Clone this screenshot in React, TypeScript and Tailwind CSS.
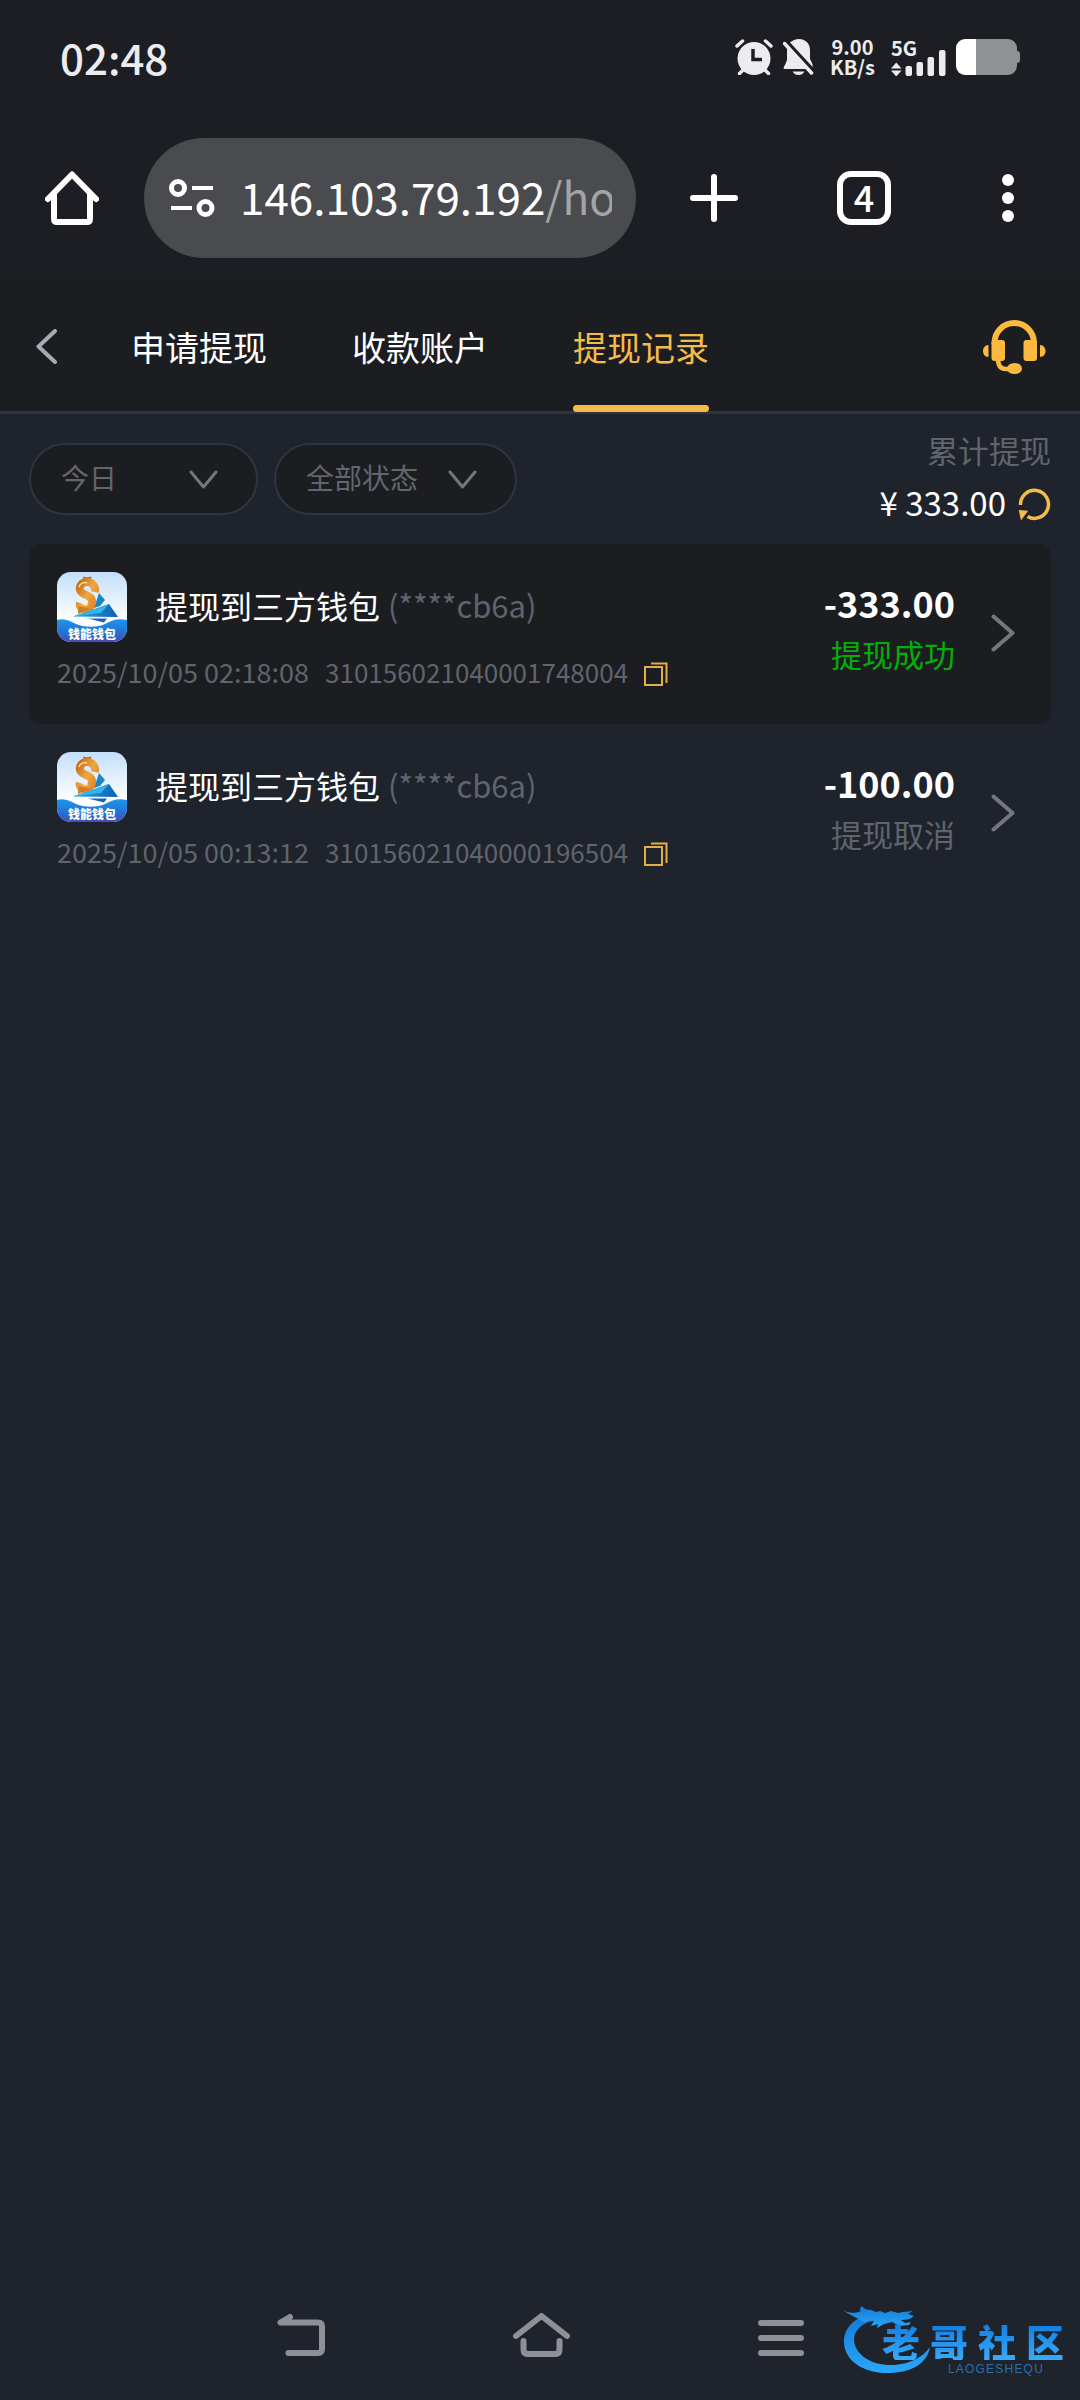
import React from 'react';

const records = [
    {
        id: '310156021040001748004',
        title: '提现到三方钱包',
        account: '(****cb6a)',
        time: '2025/10/05 02:18:08',
        amount: '-333.00',
        status: '提现成功',
        rowClass: 'bg-[#1c1d21]',
        statusClass: 'text-[#04ae08]'
    },
    {
        id: '310156021040000196504',
        title: '提现到三方钱包',
        account: '(****cb6a)',
        time: '2025/10/05 00:13:12',
        amount: '-100.00',
        status: '提现取消',
        rowClass: '',
        statusClass: 'text-[#5f646d]'
    }
];

const tabs = ['申请提现', '收款账户', '提现记录'];

const StatusBar: React.FC = () => (
    <div className="flex h-[114px] items-center justify-between pl-15 pr-[60px] text-[#ececee]">
        <span className="text-[42px] font-medium leading-none">02:48</span>
        <div className="flex items-center">
            <svg className="h-9 w-[38px]" viewBox="0 0 38 36" fill="none">
                <path d="M8 31 4.500 34.500M30 31l3.500 3.500" stroke="#ececee" strokeWidth="3.500" strokeLinecap="round" />
                <circle cx="19" cy="19.500" r="16.500" fill="#ececee" />
                <path d="M1.500 7.500 8 2M30 2l6.500 5.500" stroke="#1d1e23" strokeWidth="7" />
                <path d="M2 7 7.500 2M30.500 2l5.500 5" stroke="#ececee" strokeWidth="3.500" strokeLinecap="round" />
                <path d="M18 10v10.500h9" stroke="#1d1e23" strokeWidth="3.500" />
            </svg>
            <svg className="ml-[10px] h-9 w-[31px]" viewBox="0 0 31 36">
                <path d="M16 0c7 0 11 5 11 11v9l2 4c1 3 1 6-1 6H2c-2 0-1.500-2 0-4l2-5V11C4 5 9 0 16 0Z" fill="#ececee" />
                <path d="M9.500 32.500h12c-1.500 2.500-3.500 3.500-6 3.500s-4.500-1-6-3.500Z" fill="#ececee" />
                <path d="m3.500 2.500 28 30.500" stroke="#1d1e23" strokeWidth="4" />
                <path d="m1.500 4.500 27 29.500" stroke="#ececee" strokeWidth="3.500" strokeLinecap="round" />
            </svg>
            <div className="ml-4 text-center text-[20px] font-bold leading-[20px]">
                <div>9.00</div>
                <div>KB/s</div>
            </div>
            <div className="ml-4 flex flex-col">
                <span className="text-[20px] font-bold leading-[20px]">5G</span>
                <svg className="-mt-2 h-[26px] w-[55px]" viewBox="0 0 55 26" fill="#ececee">
                    <path d="M0 18.500 5.250 12.500l5.250 6zM0 20.500l5.250 6 5.250-6z" />
                    <rect x="14.500" y="16" width="6.500" height="10" rx="2" />
                    <rect x="25.500" y="12" width="6.500" height="14" rx="2" />
                    <rect x="36.500" y="7" width="6.500" height="19" rx="2" />
                    <rect x="48" y="0" width="6.500" height="26" rx="2" />
                </svg>
            </div>
            <svg className="ml-[10px] h-9 w-16" viewBox="0 0 64 36">
                <path d="M20 0h32a9 9 0 0 1 9 9v3c2 0 3 1 3 3v6c0 2-1 3-3 3v3a9 9 0 0 1-9 9H20z" fill="#8f9193" />
                <path d="M20 0H9a9 9 0 0 0-9 9v18a9 9 0 0 0 9 9h11z" fill="#fff" />
            </svg>
        </div>
    </div>
);

const BrowserBar: React.FC = () => (
    <div className="flex h-[168px] items-center pl-[45px] pr-[66px] text-white">
        <button aria-label="Home">
            <svg className="h-[54px] w-[54px]" viewBox="0 0 54 54" fill="none" stroke="currentColor" strokeWidth="6" strokeLinecap="round" strokeLinejoin="round">
                <path d="M3 28 27 3.500 51 28" />
                <path d="M9 24v24q0 3 3 3h30q3 0 3-3V24" />
            </svg>
        </button>
        <div className="ml-[45px] flex h-[120px] min-w-0 flex-1 items-center rounded-full bg-[#4a4b4e] pl-[25px] pr-6">
            <svg className="h-[38px] w-[46px] shrink-0" viewBox="0 0 46 38" fill="none" stroke="currentColor" strokeWidth="5">
                <circle cx="9" cy="9" r="6.500" />
                <path d="M23 9h21M2 29h21" strokeWidth="4" />
                <circle cx="36.500" cy="29" r="6.500" />
            </svg>
            <div className="ml-[25px] flex-1 overflow-hidden whitespace-nowrap pb-1 text-[44px] leading-[64px]">
                146.103.79.192<span className="text-[#a3a4a7]">/ho</span>
            </div>
        </div>
        <button aria-label="New tab" className="ml-[54px]">
            <svg className="h-12 w-12" viewBox="0 0 48 48" stroke="currentColor" strokeWidth="6" strokeLinecap="round">
                <path d="M3 24h42M24 3v42" />
            </svg>
        </button>
        <button aria-label="Tabs" className="ml-[99px] flex h-[54px] w-[54px] items-center justify-center rounded-[14px] border-[6px] border-white pb-1 text-[36px] font-medium leading-none">
            4
        </button>
        <button aria-label="Menu" className="ml-[111px]">
            <svg className="h-12 w-3" viewBox="0 0 12 48" fill="currentColor">
                <circle cx="6" cy="6" r="6" />
                <circle cx="6" cy="24" r="6" />
                <circle cx="6" cy="42" r="6" />
            </svg>
        </button>
    </div>
);

const Filter: React.FC<{ label: string; value: string; widthClass: string }> = ({ label, value, widthClass }) => (
    <div className={`relative h-[72px] ${widthClass}`}>
        <select
            aria-label={label}
            className="h-full w-full appearance-none rounded-full border-2 border-[#2f353f] bg-[#1c1d21] pb-1 pl-[30px] pr-16 text-[28px] text-[#62666d]"
        >
            <option>{value}</option>
        </select>
        <svg className="pointer-events-none absolute right-10 top-[27px] h-[19px] w-[29px]" viewBox="0 0 29 19" fill="none" stroke="#74777d" strokeWidth="3" strokeLinecap="round" strokeLinejoin="round">
            <path d="m2 2 12.500 15L27 2" />
        </svg>
    </div>
);

const WalletLogo: React.FC = () => (
    <svg className="h-[70px] w-[70px] shrink-0 rounded-[14px]" viewBox="0 0 70 70">
        <defs>
            <linearGradient id="sky" x1="0" y1="0" x2="0" y2="1">
                <stop offset="0" stopColor="#c3dffb" />
                <stop offset="0.700" stopColor="#ffffff" />
            </linearGradient>
            <linearGradient id="gold" x1="0" y1="0" x2="1" y2="1">
                <stop offset="0" stopColor="#c9721c" />
                <stop offset="0.500" stopColor="#f0a83e" />
                <stop offset="1" stopColor="#d9812a" />
            </linearGradient>
            <linearGradient id="sail" x1="0" y1="0" x2="1" y2="0">
                <stop offset="0" stopColor="#22a7e8" />
                <stop offset="1" stopColor="#0f62ae" />
            </linearGradient>
            <linearGradient id="sea" x1="0" y1="0" x2="0" y2="1">
                <stop offset="0" stopColor="#1e96ea" />
                <stop offset="0.600" stopColor="#2470d4" />
                <stop offset="1" stopColor="#4a4bb4" />
            </linearGradient>
        </defs>
        <rect width="70" height="70" fill="url(#sky)" />
        <path d="m42 21 6 7-5 6-6 2z" fill="#1a86c4" />
        <path d="M26 4.500q4 1.500 8.500 0L33 11h-6z" fill="#b9691f" />
        <path d="M38 20c1-6-3-10-8-10s-8 4-7 8c1 5 12 5 12 11 0 5-3 8-7 8-4 0-6-3-5-6" fill="none" stroke="url(#gold)" strokeWidth="8" strokeLinejoin="round" />
        <path d="M22 34c-1 3-1 5-1 8l13-5z" fill="#cc7d28" />
        <path d="M22 15c1-4 5-5 8-4M26 32c2 1.500 4 1 5 0" fill="none" stroke="#ffdf9c" strokeWidth="1.500" />
        <path d="M16 44.500 52 32l9 13z" fill="url(#sail)" />
        <path d="M16 44.500 52 32l-8 9z" fill="#35b2ea" />
        <path d="M31 46.500h19l-3 4z" fill="#1b62b4" />
        <path d="M0 48c8-2 13 1 19 4s21 4 29 0 12-6 22-4v22H0z" fill="url(#sea)" />
        <text x="35" y="67" textAnchor="middle" fontSize="12" fontWeight="900" fill="#fff">钱能钱包</text>
    </svg>
);

const Watermark: React.FC = () => (
    <div className="absolute bottom-6 right-4 h-[70px] w-[222px]">
        <svg className="absolute inset-0 h-full w-full" viewBox="0 0 222 70">
            <defs>
                <linearGradient id="dragon" x1="0" y1="0" x2="0" y2="1">
                    <stop offset="0" stopColor="#1479d6" />
                    <stop offset="1" stopColor="#2aa8fa" />
                </linearGradient>
            </defs>
            <path d="M24 9C9 14 1 25 2 37c1 18 20 31 46 30 22-1 37-9 40-26-7 10-20 17-36 18-22 1-39-10-40-25 0-8 5-14 16-19z" fill="url(#dragon)" />
            <path d="M0 4c6 3 13 4 19 1-2-1-1-3 1-5 2 3 5 4 9 4l5 2 4-1 5 2 6-2 7 2 5-1 10-1-5 3 6 2c-3 3-8 4-13 4l4 3 6-1-2 3-9 1-8-4-8 2-7 4 1-4-7 2 3-5-10 1c-6-4-14-7-22-12Z" fill="url(#dragon)" />
        </svg>
        <div className="absolute right-0 top-4 flex w-[182px] justify-between bg-gradient-to-b from-[#0f7be0] to-[#39aaf8] bg-clip-text text-[38px] font-black leading-[38px] text-transparent">
            <span>老</span>
            <span>哥</span>
            <span>社</span>
            <span>区</span>
        </div>
        <div className="absolute bottom-0 right-5 font-['Liberation_Sans'] text-[12px] leading-[14px] tracking-widest text-[#2a70a8]">LAOGESHEQU</div>
    </div>
);

const App: React.FC = () => {
    return (
        <div className="relative flex min-h-screen flex-col bg-[#1f232b] font-['Noto_Sans_CJK_SC',sans-serif]">
            <div className="bg-[#1d1e23]">
                <StatusBar />
                <BrowserBar />
            </div>

            <header className="flex h-[132px] items-center border-b-[3px] border-[#2f353f] bg-[#1c1d21] pl-9 pr-[34px]">
                <button aria-label="返回">
                    <svg className="h-[35px] w-[22px]" viewBox="0 0 22 35" fill="none" stroke="#a3acb5" strokeWidth="4" strokeLinecap="round" strokeLinejoin="round">
                        <path d="M19 2 2.500 17.500 19 33" />
                    </svg>
                </button>
                <nav className="ml-[73px] flex h-full gap-[85px]">
                    {tabs.map((tab) => (
                        <a
                            key={tab}
                            href="#"
                            className={`relative flex h-full items-center text-[34px] ${tab === '提现记录' ? 'text-[#f4bb4b]' : 'text-white'}`}
                        >
                            {tab}
                            {tab === '提现记录' && <span className="absolute inset-x-0 -bottom-px h-[7px] rounded-full bg-[#f4bb4b]"></span>}
                        </a>
                    ))}
                </nav>
                <button aria-label="客服" className="ml-auto">
                    <svg className="h-[54px] w-[63px]" viewBox="0 0 63 54" fill="#fbb93f">
                        <path d="M11.500 24v-1a19.750 20 0 0 1 39.500 0v1" fill="none" stroke="#fbb93f" strokeWidth="6" />
                        <rect x="8.500" y="20" width="13.500" height="21" rx="3" />
                        <rect x="40.500" y="20" width="13.500" height="21" rx="3" />
                        <path d="M5.500 25C2 25 0 28 0 31s2 6 5.500 6zM57 25c3.500 0 5.500 3 5.500 6s-2 6-5.500 6z" />
                        <path d="M15 39c0 7 3 10 8 10h6" fill="none" stroke="#fbb93f" strokeWidth="4.500" />
                        <ellipse cx="31.500" cy="48.500" rx="7.500" ry="5.500" />
                    </svg>
                </button>
            </header>

            <main className="px-[29px] pt-4">
                <div className="flex items-start justify-between">
                    <div className="mt-[13px] flex gap-4">
                        <Filter label="日期" value="今日" widthClass="w-[229px]" />
                        <Filter label="状态" value="全部状态" widthClass="w-[243px]" />
                    </div>
                    <div className="flex flex-col items-end gap-3">
                        <span className="text-[31px] leading-10 text-[#5f646d]">累计提现</span>
                        <div className="flex items-center text-[33px] leading-10 text-white">
                            <span>¥ 333.00</span>
                            <button aria-label="刷新" className="ml-3 pt-1">
                                <svg className="h-[33px] w-[33px]" viewBox="0 0 33 33" fill="none">
                                    <path d="M2.500 17a14 14 0 1 1 7 11.500" stroke="#f4bb4b" strokeWidth="3.500" />
                                    <path d="m.7 22 9.500.7L3 32.500z" fill="#f4bb4b" />
                                </svg>
                            </button>
                        </div>
                    </div>
                </div>

                <ul className="mt-[22px]">
                    {records.map((record) => (
                        <li key={record.id} className={`flex h-[180px] justify-between rounded-xl p-7 ${record.rowClass}`}>
                            <div>
                                <div className="flex items-center">
                                    <WalletLogo />
                                    <div className="ml-[29px] flex items-center gap-2 pb-1 leading-10">
                                        <span className="text-[32px] text-white">{record.title}</span>
                                        <span className="text-[31px] text-[#5f646d]">{record.account}</span>
                                    </div>
                                </div>
                                <div className="mt-[10px] flex items-center leading-10 text-[#5f646d]">
                                    <span className="text-[27px]">{record.time}</span>
                                    <span className="ml-4 text-[26px]">{record.id}</span>
                                    <button aria-label="复制" className="ml-4 pt-1">
                                        <svg className="h-[25px] w-6" viewBox="0 0 24 25" fill="none" stroke="#e2ae4a" strokeWidth="2">
                                            <path d="M1 5h17v18H1zM7 1.500h15.500V21" />
                                        </svg>
                                    </button>
                                </div>
                            </div>
                            <div className="flex pt-[10px]">
                                <div className="flex flex-col gap-3 text-right leading-10">
                                    <span className="text-[36px] font-bold text-white">{record.amount}</span>
                                    <span className={`text-[31px] ${record.statusClass}`}>{record.status}</span>
                                </div>
                                <button aria-label="详情" className="ml-9 mr-2 mt-8 self-start">
                                    <svg className="h-[38px] w-6" viewBox="0 0 24 38" fill="none" stroke="#74777e" strokeWidth="4" strokeLinecap="round" strokeLinejoin="round">
                                        <path d="m2.500 2.500 19 16.500-19 16.500" />
                                    </svg>
                                </button>
                            </div>
                        </li>
                    ))}
                </ul>
            </main>

            <footer className="mt-auto flex h-[130px] items-center justify-center gap-[188px] text-[#8e9096]">
                <button aria-label="Back">
                    <svg className="h-11 w-12" viewBox="0 0 48 44" fill="none" stroke="currentColor" strokeWidth="6" strokeLinecap="round" strokeLinejoin="round">
                        <path d="M13 4 3.500 9.500H41q4 0 4 4V36q0 4-4 4H11.500" />
                        <path d="M13 3.500v5H6z" strokeWidth="4" />
                    </svg>
                </button>
                <button aria-label="Home screen">
                    <svg className="h-11 w-[57px]" viewBox="0 0 57 44" fill="none" stroke="currentColor" strokeWidth="6" strokeLinecap="round" strokeLinejoin="round">
                        <path d="M3 23 28.500 3 54 23" />
                        <path d="M10.500 28v8q0 5 4 5h28q4 0 4-5v-8" />
                    </svg>
                </button>
                <button aria-label="Recent apps">
                    <svg className="h-11 w-[46px]" viewBox="0 0 46 44" stroke="currentColor" strokeWidth="6" strokeLinecap="round">
                        <path d="M3 10h40M3 25h40M3 40h40" />
                    </svg>
                </button>
            </footer>
            <Watermark />
        </div>
    );
};

export default App;
